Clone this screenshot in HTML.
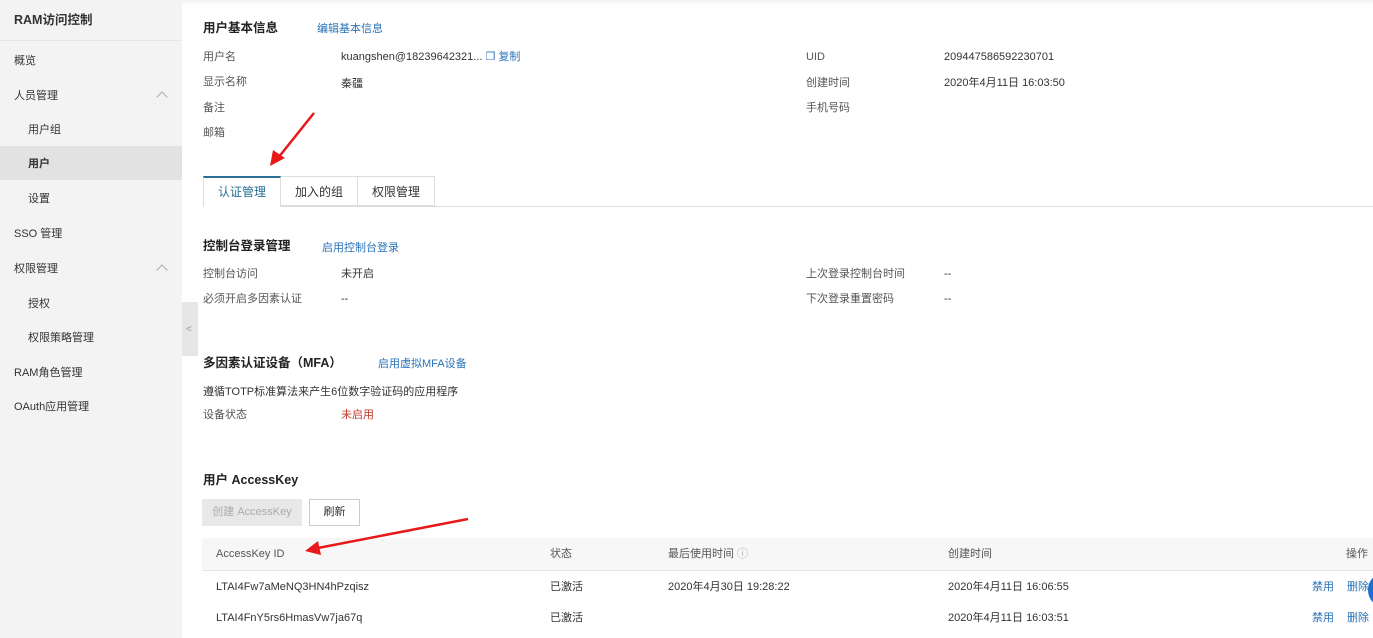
<!DOCTYPE html>
<html><head><meta charset="utf-8"><style>
*{margin:0;padding:0;box-sizing:border-box}
body{width:1373px;height:638px;overflow:hidden;background:#fff;font-family:"Liberation Sans","Noto Sans CJK SC",sans-serif;font-size:11px;color:#333;position:relative}
.a{position:absolute;white-space:nowrap;line-height:16px}
.side{position:absolute;left:0;top:0;width:182px;height:638px;background:#f3f3f4}
.blue{color:#2a73b8}
.t{font-size:12.5px;font-weight:bold;color:#222}
.g{color:#555}
.chev{position:absolute;width:8px;height:8px;border-left:1px solid #aaa;border-top:1px solid #aaa;transform:rotate(45deg)}
</style></head><body>
<div class="side">
<div class="a" style="left:0;top:0;width:182px;height:41px;border-bottom:1px solid #e6e6e6"></div>
<div class="a" style="left:14px;top:12px;font-size:12.5px;font-weight:bold;color:#333">RAM访问控制</div>
<div class="a" style="left:14px;top:53px">概览</div>
<div class="a" style="left:14px;top:88px">人员管理</div><div class="chev" style="left:158px;top:93px"></div>
<div class="a" style="left:28px;top:122px">用户组</div>
<div class="a" style="left:0;top:146px;width:182px;height:34px;background:#e2e2e3"></div>
<div class="a" style="left:28px;top:156px;font-weight:bold">用户</div>
<div class="a" style="left:28px;top:191px">设置</div>
<div class="a" style="left:14px;top:226px">SSO 管理</div>
<div class="a" style="left:14px;top:261px">权限管理</div><div class="chev" style="left:158px;top:266px"></div>
<div class="a" style="left:28px;top:296px">授权</div>
<div class="a" style="left:28px;top:330px">权限策略管理</div>
<div class="a" style="left:14px;top:365px">RAM角色管理</div>
<div class="a" style="left:14px;top:399px">OAuth应用管理</div>
</div>
<div class="a" style="left:182px;top:302px;width:16px;height:54px;background:#e6e6e6"></div>
<div class="a" style="left:186px;top:322px;color:#999;font-size:10px">&lt;</div>
<div class="a" style="left:182px;top:0;width:1191px;height:6px;background:linear-gradient(#f2f2f2,#fff)"></div>

<div class="a t" style="left:203px;top:20px">用户基本信息</div>
<div class="a blue" style="left:317px;top:21px">编辑基本信息</div>
<div class="a g" style="left:203px;top:49px">用户名</div>
<div class="a" style="left:341px;top:49px">kuangshen@18239642321... <span class="blue">❐ 复制</span></div>
<div class="a g" style="left:203px;top:74px">显示名称</div><div class="a" style="left:341px;top:76px">秦疆</div>
<div class="a g" style="left:203px;top:100px">备注</div>
<div class="a g" style="left:203px;top:125px">邮箱</div>
<div class="a g" style="left:806px;top:49px">UID</div><div class="a" style="left:944px;top:49px">209447586592230701</div>
<div class="a g" style="left:806px;top:75px">创建时间</div><div class="a" style="left:944px;top:75px">2020年4月11日 16:03:50</div>
<div class="a g" style="left:806px;top:100px">手机号码</div>

<div class="a" style="left:203px;top:206px;width:1170px;border-top:1px solid #ddd"></div>
<div class="a" style="left:203px;top:176px;width:78px;height:31px;border:1px solid #ddd;border-top:2px solid #2a6f95;border-bottom:none;background:#fff;text-align:center;line-height:29px;font-size:12px;color:#2a6f95">认证管理</div>
<div class="a" style="left:281px;top:176px;width:77px;height:30px;border:1px solid #ddd;border-left:none;text-align:center;line-height:30px;font-size:12px">加入的组</div>
<div class="a" style="left:358px;top:176px;width:77px;height:30px;border:1px solid #ddd;border-left:none;text-align:center;line-height:30px;font-size:12px">权限管理</div>

<div class="a t" style="left:203px;top:238px">控制台登录管理</div>
<div class="a blue" style="left:322px;top:240px">启用控制台登录</div>
<div class="a g" style="left:203px;top:266px">控制台访问</div><div class="a" style="left:341px;top:266px">未开启</div>
<div class="a g" style="left:203px;top:291px">必须开启多因素认证</div><div class="a" style="left:341px;top:291px">--</div>
<div class="a g" style="left:806px;top:266px">上次登录控制台时间</div><div class="a" style="left:944px;top:266px">--</div>
<div class="a g" style="left:806px;top:291px">下次登录重置密码</div><div class="a" style="left:944px;top:291px">--</div>

<div class="a t" style="left:203px;top:355px">多因素认证设备（MFA）</div>
<div class="a blue" style="left:378px;top:356px">启用虚拟MFA设备</div>
<div class="a" style="left:203px;top:384px">遵循TOTP标准算法来产生6位数字验证码的应用程序</div>
<div class="a g" style="left:203px;top:407px">设备状态</div><div class="a" style="left:341px;top:407px;color:#c0392b">未启用</div>

<div class="a t" style="left:203px;top:472px">用户 AccessKey</div>
<div class="a" style="left:202px;top:499px;width:100px;height:27px;background:#e8e8e8;color:#aaa;text-align:center;line-height:27px">创建 AccessKey</div>
<div class="a" style="left:309px;top:499px;width:51px;height:27px;border:1px solid #ccc;text-align:center;line-height:25px">刷新</div>

<div class="a" style="left:202px;top:538px;width:1171px;height:33px;background:#f7f7f7;border-bottom:1px solid #e5e5e5"></div>
<div class="a g" style="left:216px;top:546px">AccessKey ID</div>
<div class="a g" style="left:550px;top:546px">状态</div>
<div class="a g" style="left:668px;top:546px">最后使用时间 <span style="color:#aaa">ⓘ</span></div>
<div class="a g" style="left:948px;top:546px">创建时间</div>
<div class="a g" style="left:1346px;top:546px">操作</div>
<div class="a" style="left:216px;top:579px">LTAI4Fw7aMeNQ3HN4hPzqisz</div><div class="a" style="left:550px;top:579px">已激活</div>
<div class="a" style="left:668px;top:579px">2020年4月30日 19:28:22</div><div class="a" style="left:948px;top:579px">2020年4月11日 16:06:55</div>
<div class="a blue" style="left:1312px;top:579px">禁用</div><div class="a blue" style="left:1347px;top:579px">删除</div>
<div class="a" style="left:216px;top:610px">LTAI4FnY5rs6HmasVw7ja67q</div><div class="a" style="left:550px;top:610px">已激活</div>
<div class="a" style="left:948px;top:610px">2020年4月11日 16:03:51</div>
<div class="a blue" style="left:1312px;top:610px">禁用</div><div class="a blue" style="left:1347px;top:610px">删除</div>
<div class="a" style="left:1368px;top:575px;width:24px;height:30px;border-radius:50%;background:#1a6fd0"></div>

<svg class="a" style="left:0;top:0" width="1373" height="638">
<g stroke="#e8191b" stroke-width="2.5" fill="#e8191b">
<line x1="314" y1="113" x2="278" y2="158"/><polygon points="270,166 273,150 285,158" stroke="none"/>
<line x1="468" y1="519" x2="318" y2="548"/><polygon points="305,551 318,541 321,555" stroke="none"/>
</g></svg>
</body></html>
